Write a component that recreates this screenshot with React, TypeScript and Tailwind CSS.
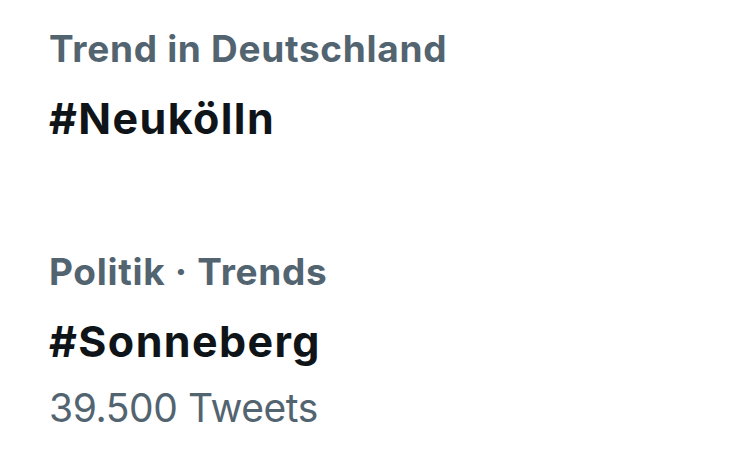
import React from "react";

interface TrendProps {
  meta: string;
  tag: string;
  count?: string;
}

const Trend = ({ meta, tag, count }: TrendProps) => (
  <div className="flex flex-col">
    <p className="text-[37px] leading-none tracking-[0.7px] font-bold text-[#536471]">{meta}</p>
    <p className="mt-[30px] text-[43px] leading-none tracking-[1.4px] font-bold text-[#0f1419]">
      {tag}
    </p>
    {count && (
      <p className="mt-[25px] text-[39px] leading-none tracking-[-0.4px] text-[#536471]">
        {count}
      </p>
    )}
  </div>
);

export default function App() {
  return (
    <div
      className="w-[733px] h-[471px] bg-white px-[49px] pt-[30px] flex flex-col gap-[113px]"
      style={{ fontFamily: "Inter, 'Noto Sans', sans-serif" }}
    >
      <Trend meta="Trend in Deutschland" tag="#Neukölln" />
      <Trend meta="Politik · Trends" tag="#Sonneberg" count="39.500 Tweets" />
    </div>
  );
}
